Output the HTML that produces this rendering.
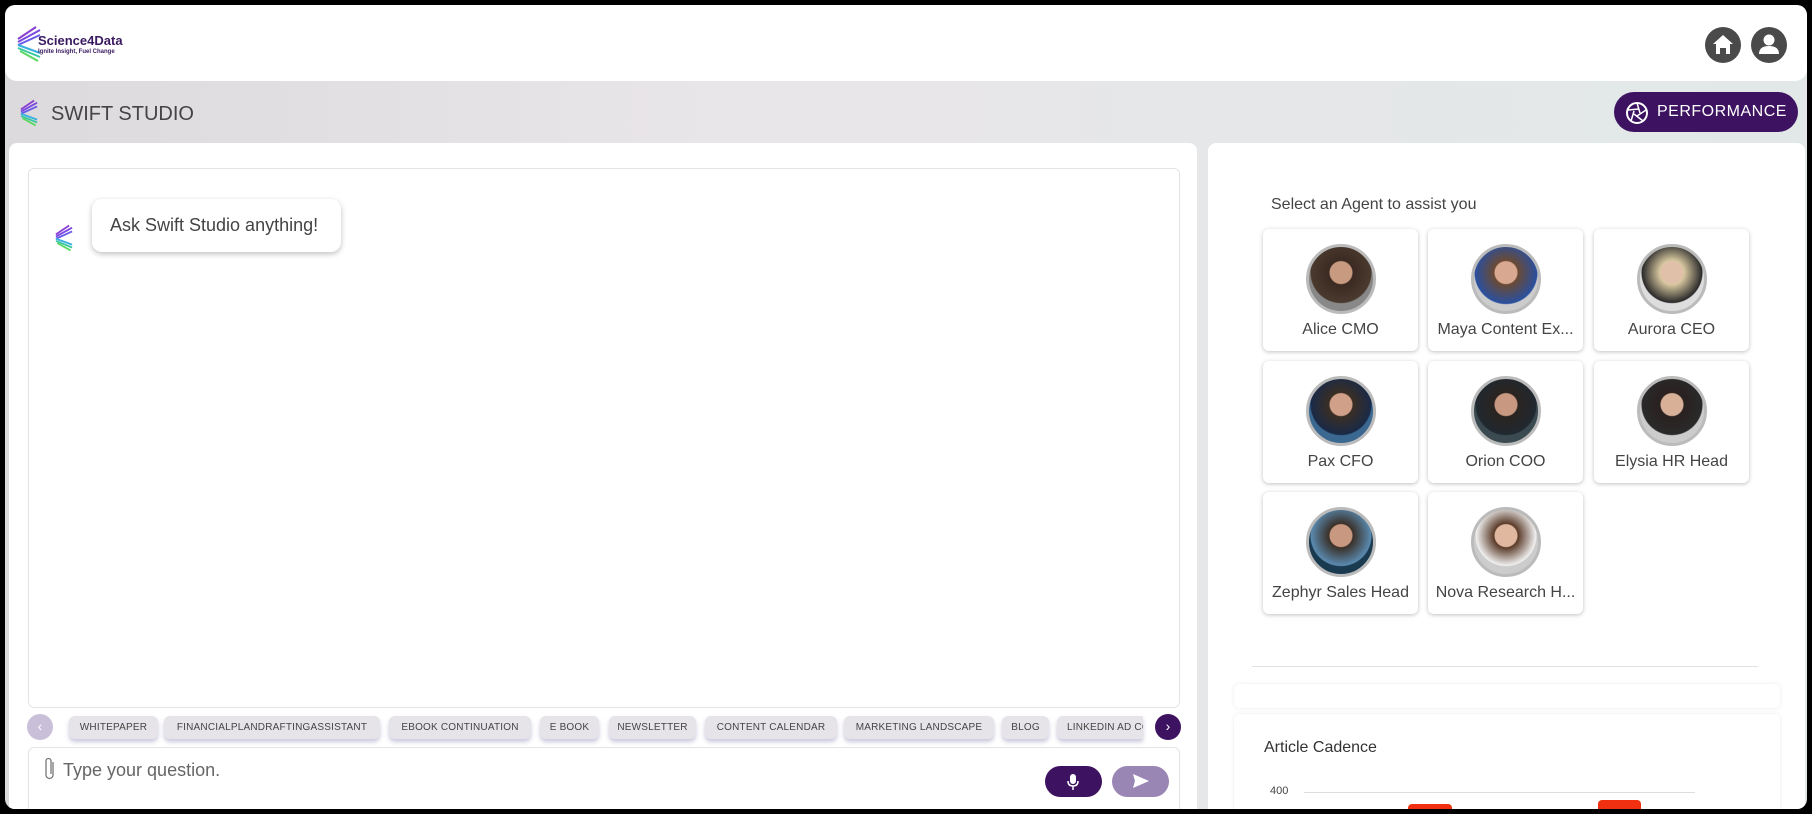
<!DOCTYPE html>
<html><head><meta charset="utf-8"><style>
*{box-sizing:border-box;margin:0;padding:0}
body{width:1812px;height:814px;background:#000;position:relative;overflow:hidden;font-family:"Liberation Sans",sans-serif}
.frame{position:absolute;left:5px;top:5px;width:1802px;height:804px;background:linear-gradient(90deg,#dcdadc,#e9e6e9 40%,#e2e8e8);border-radius:10px;overflow:hidden}
.hdr{position:absolute;left:0;top:0;width:1802px;height:76px;background:#fff;border-radius:10px 10px 12px 12px}
.abs{position:absolute}
.panel{position:absolute;background:#fff;border-radius:8px}
.chip{position:absolute;top:711px;height:23px;background:#e6e4e8;border-radius:6px;box-shadow:0 3px 4px rgba(120,120,170,.4);font-size:10px;color:#444;line-height:23px;text-align:center;white-space:nowrap;overflow:hidden;letter-spacing:.2px}
.card{position:absolute;width:155px;height:122px;background:#fff;border-radius:6px;box-shadow:0 1px 4px rgba(0,0,0,.25);text-align:center}
.card .av{position:absolute;left:43px;top:15px;width:70px;height:70px;border-radius:50%;border:3px solid #bbb;overflow:hidden}
.card .nm{position:absolute;left:0;right:0;top:92px;font-size:16px;color:#444}
</style></head><body>
<div class="frame">
 <div class="hdr"></div>
 <svg class="abs" style="left:9px;top:20px" width="30" height="38" viewBox="0 0 30 38">
  <g stroke-width="2" fill="none"><path d="M4 14 L22 2" stroke="#8a3fd0"/><path d="M4 17 L26 5" stroke="#7a48e0"/><path d="M4 20 L26 10" stroke="#6a5ae8"/><path d="M4 20 L26 28" stroke="#3ab0e0"/><path d="M4 23 L26 32" stroke="#3ac8a0"/><path d="M6 26 L24 36" stroke="#5ad860"/></g></svg>
 <div class="abs" style="left:33px;top:28px;font-weight:bold;font-size:13px;color:#3a1a60">Science4Data</div>
 <div class="abs" style="left:33px;top:44px;font-size:6px;font-weight:bold;color:#3a1a60">Ignite Insight, Fuel Change</div>
 <svg class="abs" style="left:1699px;top:21px" width="38" height="38" viewBox="0 0 38 38"><circle cx="19" cy="19" r="18" fill="#4a4a4a"/><path d="M19 9 L29 18 H26 V28 H22 V22 H16 V28 H12 V18 H9 Z" fill="#fff"/></svg>
 <svg class="abs" style="left:1745px;top:21px" width="38" height="38" viewBox="0 0 38 38"><circle cx="19" cy="19" r="18" fill="#4a4a4a"/><circle cx="19" cy="14" r="5.5" fill="#fff"/><path d="M9 28 Q9 20 19 20 Q29 20 29 28 Z" fill="#fff"/></svg>
 <svg class="abs" style="left:13px;top:94px" width="22" height="28" viewBox="0 0 30 38"><g stroke-width="2.5" fill="none"><path d="M4 14 L22 2" stroke="#8a3fd0"/><path d="M4 17 L26 5" stroke="#7a48e0"/><path d="M4 20 L26 10" stroke="#6a5ae8"/><path d="M4 20 L26 28" stroke="#3ab0e0"/><path d="M4 23 L26 32" stroke="#3ac8a0"/><path d="M6 26 L24 36" stroke="#5ad860"/></g></svg>
 <div class="abs" style="left:46px;top:98px;font-size:20px;color:#444">SWIFT STUDIO</div>
 <div class="abs" style="left:1609px;top:87px;width:184px;height:40px;border-radius:20px;background:#3d1260;color:#fff;font-size:16px;line-height:40px;padding-left:43px;letter-spacing:.5px">PERFORMANCE</div>
 <svg class="abs" style="left:1620px;top:96px" width="24" height="24" viewBox="0 0 24 24"><circle cx="12" cy="12" r="10" fill="none" stroke="#fff" stroke-width="2"/><g stroke="#fff" stroke-width="1.5"><path d="M12 2 L15 12"/><path d="M21 9 L12 15"/><path d="M18 20 L9 13"/><path d="M6 20 L9 10"/><path d="M3 9 L14 8"/></g></svg>

 <div class="panel" style="left:4px;top:138px;width:1188px;height:680px"></div>
 <div class="panel" style="left:23px;top:163px;width:1152px;height:540px;border:1px solid #e4e4e4;border-radius:6px"></div>
 <svg class="abs" style="left:48px;top:216px" width="22" height="34" viewBox="0 0 30 38"><g stroke-width="2.5" fill="none"><path d="M4 14 L22 2" stroke="#8a3fd0"/><path d="M4 17 L26 5" stroke="#7a48e0"/><path d="M4 20 L26 10" stroke="#6a5ae8"/><path d="M4 20 L26 28" stroke="#3ab0e0"/><path d="M4 23 L26 32" stroke="#3ac8a0"/><path d="M6 26 L24 36" stroke="#5ad860"/></g></svg>
 <div class="abs" style="left:87px;top:194px;width:249px;height:53px;background:#fff;border-radius:10px;box-shadow:0 2px 6px rgba(0,0,0,.25);font-size:18px;color:#444;line-height:53px;padding-left:18px">Ask Swift Studio anything!</div>

 <div class="abs" style="left:22px;top:709px;width:26px;height:26px;border-radius:50%;background:#c9bfd8;color:#fff;text-align:center;line-height:25px;font-size:14px">‹</div>
 <div class="chip" style="left:64px;width:89px">WHITEPAPER</div>
 <div class="chip" style="left:159px;width:216px">FINANCIALPLANDRAFTINGASSISTANT</div>
 <div class="chip" style="left:384px;width:142px">EBOOK CONTINUATION</div>
 <div class="chip" style="left:535px;width:59px">E BOOK</div>
 <div class="chip" style="left:604px;width:87px">NEWSLETTER</div>
 <div class="chip" style="left:700px;width:132px">CONTENT CALENDAR</div>
 <div class="chip" style="left:839px;width:150px">MARKETING LANDSCAPE</div>
 <div class="chip" style="left:997px;width:47px">BLOG</div>
 <div class="chip" style="left:1052px;width:86px;border-radius:6px 0 0 6px;text-align:left;padding-left:10px">LINKEDIN AD COPY</div>
 <div class="abs" style="left:1150px;top:709px;width:26px;height:26px;border-radius:50%;background:#3d1260;color:#fff;text-align:center;line-height:25px;font-size:14px">›</div>

 <div class="panel" style="left:23px;top:742px;width:1152px;height:70px;border:1px solid #e4e4e4;border-radius:6px"></div>
 <svg class="abs" style="left:38px;top:751px" width="14" height="26" viewBox="0 0 14 26"><path d="M10 6 V19 A3.5 3.5 0 0 1 3 19 V5 A2.5 2.5 0 0 1 8 5 V18" fill="none" stroke="#777" stroke-width="1.3"/></svg>
 <div class="abs" style="left:58px;top:755px;font-size:18px;color:#666">Type your question.</div>
 <div class="abs" style="left:1040px;top:761px;width:57px;height:31px;border-radius:16px;background:#3d1260"></div>
 <svg class="abs" style="left:1061px;top:768px" width="14" height="18" viewBox="0 0 14 18"><rect x="4" y="1" width="6" height="10" rx="3" fill="#fff"/><path d="M2 8 Q2 13 7 13 Q12 13 12 8 M7 13 V17" stroke="#fff" stroke-width="1.5" fill="none"/></svg>
 <div class="abs" style="left:1107px;top:761px;width:57px;height:31px;border-radius:16px;background:#9a86b4"></div>
 <svg class="abs" style="left:1127px;top:768px" width="18" height="16" viewBox="0 0 18 16"><path d="M1 1 L17 8 L1 15 L3 8 Z" fill="#fff"/></svg>

 <div class="panel" style="left:1203px;top:138px;width:597px;height:680px"></div>
 <div class="abs" style="left:1266px;top:191px;font-size:16px;color:#444">Select an Agent to assist you</div>

 <div class="card" style="left:1258px;top:224px"><div class="av" style="background:radial-gradient(circle at 50% 40%,#c89a80 22%,#3a2a22 24%,#4a3a2e 60%,#888 62%)"></div><div class="nm">Alice CMO</div></div>
 <div class="card" style="left:1423px;top:224px"><div class="av" style="background:radial-gradient(circle at 50% 40%,#d8a890 22%,#6a4a34 24%,#2a50a0 62%,#ccc 64%)"></div><div class="nm">Maya Content Ex...</div></div>
 <div class="card" style="left:1589px;top:224px"><div class="av" style="background:radial-gradient(circle at 50% 40%,#e0c0a8 22%,#d8c8a0 24%,#2a2a2a 60%,#ddd 62%)"></div><div class="nm">Aurora CEO</div></div>
 <div class="card" style="left:1258px;top:356px"><div class="av" style="background:radial-gradient(circle at 50% 40%,#d0a088 22%,#3a2e24 24%,#1a2a48 60%,#3a6890 62%)"></div><div class="nm">Pax CFO</div></div>
 <div class="card" style="left:1423px;top:356px"><div class="av" style="background:radial-gradient(circle at 50% 40%,#c89880 22%,#2a2420 24%,#202830 60%,#3a4a50 62%)"></div><div class="nm">Orion COO</div></div>
 <div class="card" style="left:1589px;top:356px"><div class="av" style="background:radial-gradient(circle at 50% 40%,#d8b098 22%,#2a2020 24%,#2a2a2a 60%,#ccc 62%)"></div><div class="nm">Elysia HR Head</div></div>
 <div class="card" style="left:1258px;top:487px"><div class="av" style="background:radial-gradient(circle at 50% 40%,#c89880 22%,#3a3028 24%,#5a8ab0 60%,#1a3a50 62%)"></div><div class="nm">Zephyr Sales Head</div></div>
 <div class="card" style="left:1423px;top:487px"><div class="av" style="background:radial-gradient(circle at 50% 40%,#e0b8a0 22%,#5a3a28 24%,#f0f0f0 60%,#ccc 62%)"></div><div class="nm">Nova Research H...</div></div>

 <div class="abs" style="left:1247px;top:661px;width:506px;height:1px;background:#e2e2e2"></div>
 <div class="abs" style="left:1229px;top:679px;width:546px;height:24px;background:#fff;border-radius:6px;box-shadow:0 0 4px rgba(200,180,210,.3)"></div>
 <div class="abs" style="left:1229px;top:709px;width:546px;height:110px;background:#fff;border-radius:6px;box-shadow:0 0 4px rgba(200,180,210,.3)"></div>
 <div class="abs" style="left:1259px;top:734px;font-size:16px;color:#333">Article Cadence</div>
 <div class="abs" style="left:1265px;top:780px;font-size:11px;color:#444">400</div>
 <div class="abs" style="left:1299px;top:787px;width:391px;height:1px;background:#ddd"></div>
 <div class="abs" style="left:1403px;top:799px;width:44px;height:20px;background:#f03010;border-radius:4px 4px 0 0"></div>
 <div class="abs" style="left:1593px;top:795px;width:43px;height:24px;background:#f03010;border-radius:4px 4px 0 0"></div>
</div>
</body></html>
